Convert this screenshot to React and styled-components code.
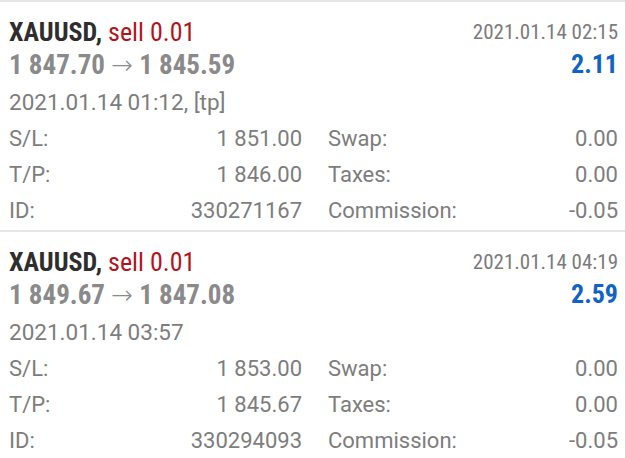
import React from "react";
import styled, { createGlobalStyle } from "styled-components";

const GlobalStyle = createGlobalStyle`
  html, body {
    margin: 0;
    padding: 0;
    background: #ffffff;
  }
  body {
    font-family: Roboto, "Liberation Sans", sans-serif;
    width: 625px;
    overflow: hidden;
  }
`;

const List = styled.div`
  display: flex;
  flex-direction: column;
`;

const Card = styled.div`
  box-sizing: border-box;
  height: 230px;
  border-top: 2px solid #e6e6e6;
  padding: 14px 7px 0 9px;
`;

const Header = styled.div`
  display: grid;
  grid-template-columns: 1fr auto;
  grid-template-rows: 32px 32px;
  align-items: start;
`;

const Condensed = styled.span`
  font-family: "Roboto Condensed", Roboto, "Liberation Sans", sans-serif;
  font-stretch: condensed;
  line-height: 32px;
  white-space: nowrap;
`;

const Symbol = styled(Condensed)`
  font-size: 26px;
  font-weight: 700;
  color: #2e2e2e;
`;

const Side = styled.span`
  font-weight: 400;
  color: #b3141c;
`;

const Prices = styled(Condensed)`
  font-size: 27px;
  font-weight: 700;
  color: #8a8a8a;
`;

const Arrow = styled.span`
  font-family: "Noto Sans", "DejaVu Sans", sans-serif;
  font-weight: 300;
  font-size: 26px;
`;

const CloseTime = styled(Condensed)`
  font-size: 21px;
  color: #7b7b7b;
  text-align: right;
`;

const Profit = styled(Condensed)`
  font-size: 26px;
  font-weight: 700;
  color: #0f63c6;
  text-align: right;
`;

const OpenTime = styled.div`
  font-size: 22.5px;
  line-height: 30px;
  color: #7d7d7d;
  margin: 7px 0 4px;
`;

const Details = styled.div`
  display: grid;
  grid-template-columns: 95px 198px 160px 1fr;
  grid-auto-rows: 36px;
  font-size: 22px;
  line-height: 36px;
  color: #7d7d7d;
`;

const Label = styled.span`
  padding-left: ${(p) => (p.$second ? "26px" : "0")};
  white-space: nowrap;
`;

const Value = styled.span`
  text-align: right;
  white-space: nowrap;
`;

const deals = [
  {
    symbol: "XAUUSD",
    side: "sell 0.01",
    open: "1 847.70",
    close: "1 845.59",
    closeTime: "2021.01.14 02:15",
    profit: "2.11",
    openTime: "2021.01.14 01:12, [tp]",
    sl: "1 851.00",
    tp: "1 846.00",
    id: "330271167",
    swap: "0.00",
    taxes: "0.00",
    commission: "-0.05",
  },
  {
    symbol: "XAUUSD",
    side: "sell 0.01",
    open: "1 849.67",
    close: "1 847.08",
    closeTime: "2021.01.14 04:19",
    profit: "2.59",
    openTime: "2021.01.14 03:57",
    sl: "1 853.00",
    tp: "1 845.67",
    id: "330294093",
    swap: "0.00",
    taxes: "0.00",
    commission: "-0.05",
  },
];

const DealCard = ({ deal }) => (
  <Card>
    <Header>
      <Symbol>
        {deal.symbol}, <Side>{deal.side}</Side>
      </Symbol>
      <CloseTime>{deal.closeTime}</CloseTime>
      <Prices>
        {deal.open} <Arrow>→</Arrow> {deal.close}
      </Prices>
      <Profit>{deal.profit}</Profit>
    </Header>
    <OpenTime>{deal.openTime}</OpenTime>
    <Details>
      <Label>S/L:</Label>
      <Value>{deal.sl}</Value>
      <Label $second>Swap:</Label>
      <Value>{deal.swap}</Value>
      <Label>T/P:</Label>
      <Value>{deal.tp}</Value>
      <Label $second>Taxes:</Label>
      <Value>{deal.taxes}</Value>
      <Label>ID:</Label>
      <Value>{deal.id}</Value>
      <Label $second>Commission:</Label>
      <Value>{deal.commission}</Value>
    </Details>
  </Card>
);

export default function App() {
  return (
    <>
      <GlobalStyle />
      <List>
        {deals.map((d) => (
          <DealCard key={d.id} deal={d} />
        ))}
      </List>
    </>
  );
}
